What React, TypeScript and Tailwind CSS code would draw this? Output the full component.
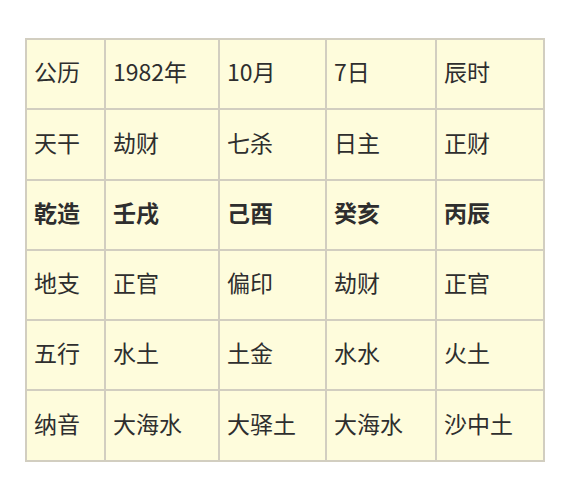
const rows: { cells: string[]; bold?: boolean; tall?: boolean }[] = [
  { cells: ["公历", "1982年", "10月", "7日", "辰时"] },
  { cells: ["天干", "劫财", "七杀", "日主", "正财"], tall: true },
  { cells: ["乾造", "壬戌", "己酉", "癸亥", "丙辰"], bold: true },
  { cells: ["地支", "正官", "偏印", "劫财", "正官"] },
  { cells: ["五行", "水土", "土金", "水水", "火土"] },
  { cells: ["纳音", "大海水", "大驿土", "大海水", "沙中土"], tall: true },
];

const widths = ["w-[79px]", "w-[114px]", "w-[107px]", "w-[110px]", "w-[108px]"];

export default function App() {
  return (
    <div
      className="h-[500px] w-[568px] bg-white pl-[25px] pt-[38px]"
      style={{ fontFamily: '"Noto Sans CJK SC", "Noto Sans", sans-serif' }}
    >
      <table className="table-fixed border-collapse border-2 border-[#d2cec0] bg-[#fefcdc] text-[23px] leading-none text-[#2e2e2e]">
        <colgroup>
          {widths.map((w, i) => (
            <col key={i} className={w} />
          ))}
        </colgroup>
        <tbody>
          {rows.map((row, r) => (
            <tr key={r} className={row.tall ? "h-[71px]" : "h-[70px]"}>
              {row.cells.map((c, i) => (
                <td
                  key={i}
                  className={`border-2 border-[#d2cec0] pl-[7px] pb-[5px] align-middle ${
                    row.bold ? "font-bold" : "font-normal"
                  }`}
                >
                  {c}
                </td>
              ))}
            </tr>
          ))}
        </tbody>
      </table>
    </div>
  );
}
